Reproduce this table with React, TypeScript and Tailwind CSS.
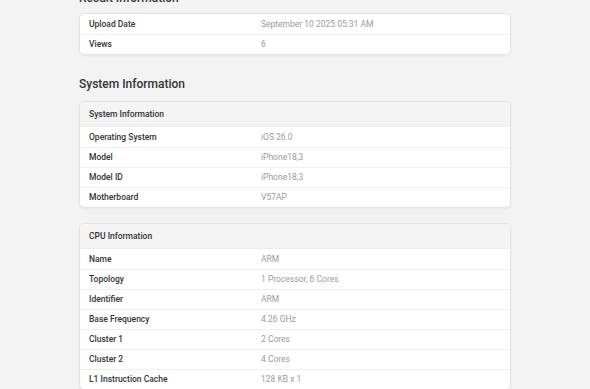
import React from 'react';

type Row = [string, string];

const resultRows: Row[] = [
  ['Upload Date', 'September 10 2025 05:31 AM'],
  ['Views', '6'],
];

const systemRows: Row[] = [
  ['Operating System', 'iOS 26.0'],
  ['Model', 'iPhone18,3'],
  ['Model ID', 'iPhone18,3'],
  ['Motherboard', 'V57AP'],
];

const cpuRows: Row[] = [
  ['Name', 'ARM'],
  ['Topology', '1 Processor, 6 Cores'],
  ['Identifier', 'ARM'],
  ['Base Frequency', '4.26 GHz'],
  ['Cluster 1', '2 Cores'],
  ['Cluster 2', '4 Cores'],
  ['L1 Instruction Cache', '128 KB x 1'],
];

function InfoCard({ title, rows }: { title?: string; rows: Row[] }) {
  return (
    <div className="bg-white rounded-[5px] border border-[#e4e4e4] shadow-[0_1px_3px_rgba(0,0,0,0.06)] overflow-hidden">
      {title && (
        <div className="h-[25px] flex items-center pl-[9px] bg-[#f4f4f4] border-b border-[#ececec] text-[8.5px] font-medium text-[#333]">
          {title}
        </div>
      )}
      {rows.map(([label, value], i) => (
        <div
          key={label}
          className={`flex h-[20px] items-center text-[8.5px] ${i > 0 ? 'border-t border-[#eeeeee]' : ''}`}
        >
          <div className="w-[181px] pl-[9px] font-medium text-[#333]">{label}</div>
          <div className="flex-1 text-[#9a9a9a]">{value}</div>
        </div>
      ))}
    </div>
  );
}

export default function App() {
  return (
    <div className="min-h-screen bg-[#f3f3f3] overflow-hidden" style={{ fontFamily: 'Roboto, "Noto Sans", sans-serif' }}>
      <div className="max-w-[432px] mx-auto">
        <h2 className="mt-[-10px] mb-[7px] text-[12px] leading-[16px] font-medium text-[#333]">Result Information</h2>
        <InfoCard rows={resultRows} />

        <h2 className="mt-[21px] mb-[9px] text-[12px] leading-[16px] font-medium text-[#333]">System Information</h2>
        <div className="flex flex-col gap-[15px]">
          <InfoCard title="System Information" rows={systemRows} />
          <InfoCard title="CPU Information" rows={cpuRows} />
        </div>
      </div>
    </div>
  );
}
